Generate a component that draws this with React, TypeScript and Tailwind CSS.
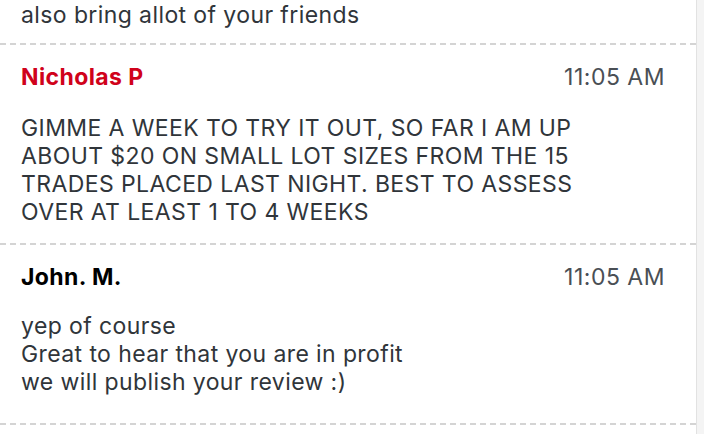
import React from "react";

type Msg = {
    name: string;
    nameClass: string;
    time: string;
    lines: string[];
    bodyClass: string;
};

const MESSAGES: Msg[] = [
    {
        name: "Nicholas P",
        nameClass: "text-[#d0021b]",
        time: "11:05 AM",
        lines: [
            "GIMME A WEEK TO TRY IT OUT, SO FAR I AM UP",
            "ABOUT $20 ON SMALL LOT SIZES FROM THE 15",
            "TRADES PLACED LAST NIGHT. BEST TO ASSESS",
            "OVER AT LEAST 1 TO 4 WEEKS",
        ],
        bodyClass: "mt-[23px] pb-[17px]",
    },
    {
        name: "John. M.",
        nameClass: "text-black",
        time: "11:05 AM",
        lines: ["yep of course", "Great to hear that you are in profit", "we will publish your review :)"],
        bodyClass: "mt-[21px] pb-[27px]",
    },
];

function Message({ msg }: { msg: Msg }) {
    return (
        <div className="border-b-2 border-dashed border-[#d4d4d4] pl-[21px] pr-[31px] pt-[18px]">
            <div className="flex items-center justify-between leading-[28px]">
                <span className={`text-[23px] font-bold tracking-[0.4px] ${msg.nameClass}`}>{msg.name}</span>
                <span className="text-[23px] tracking-[0.5px] text-[#4a4f55]">{msg.time}</span>
            </div>
            <div className={`text-[23px] leading-[28px] tracking-[0.4px] text-[#30353a] ${msg.bodyClass}`}>
                {msg.lines.map((line, i) => (
                    <div key={i}>{line}</div>
                ))}
            </div>
        </div>
    );
}

export default function App() {
    return (
        <div className="flex h-[434px] w-[704px] overflow-hidden bg-white font-['Inter',sans-serif]">
            <div className="flex w-[696px] flex-col">
                {/* tail of the previous message */}
                <div className="border-b-2 border-dashed border-[#d4d4d4] pb-[14px] pl-[21px] pt-[1px] text-[23px] leading-[28px] tracking-[0.4px] text-[#30353a]">
                    also bring allot of your friends
                </div>
                {MESSAGES.map((m, i) => (
                    <Message key={i} msg={m} />
                ))}
            </div>
            <div className="w-[8px] border-l border-[#e2e2e2] bg-[#f4f4f4]" />
        </div>
    );
}
